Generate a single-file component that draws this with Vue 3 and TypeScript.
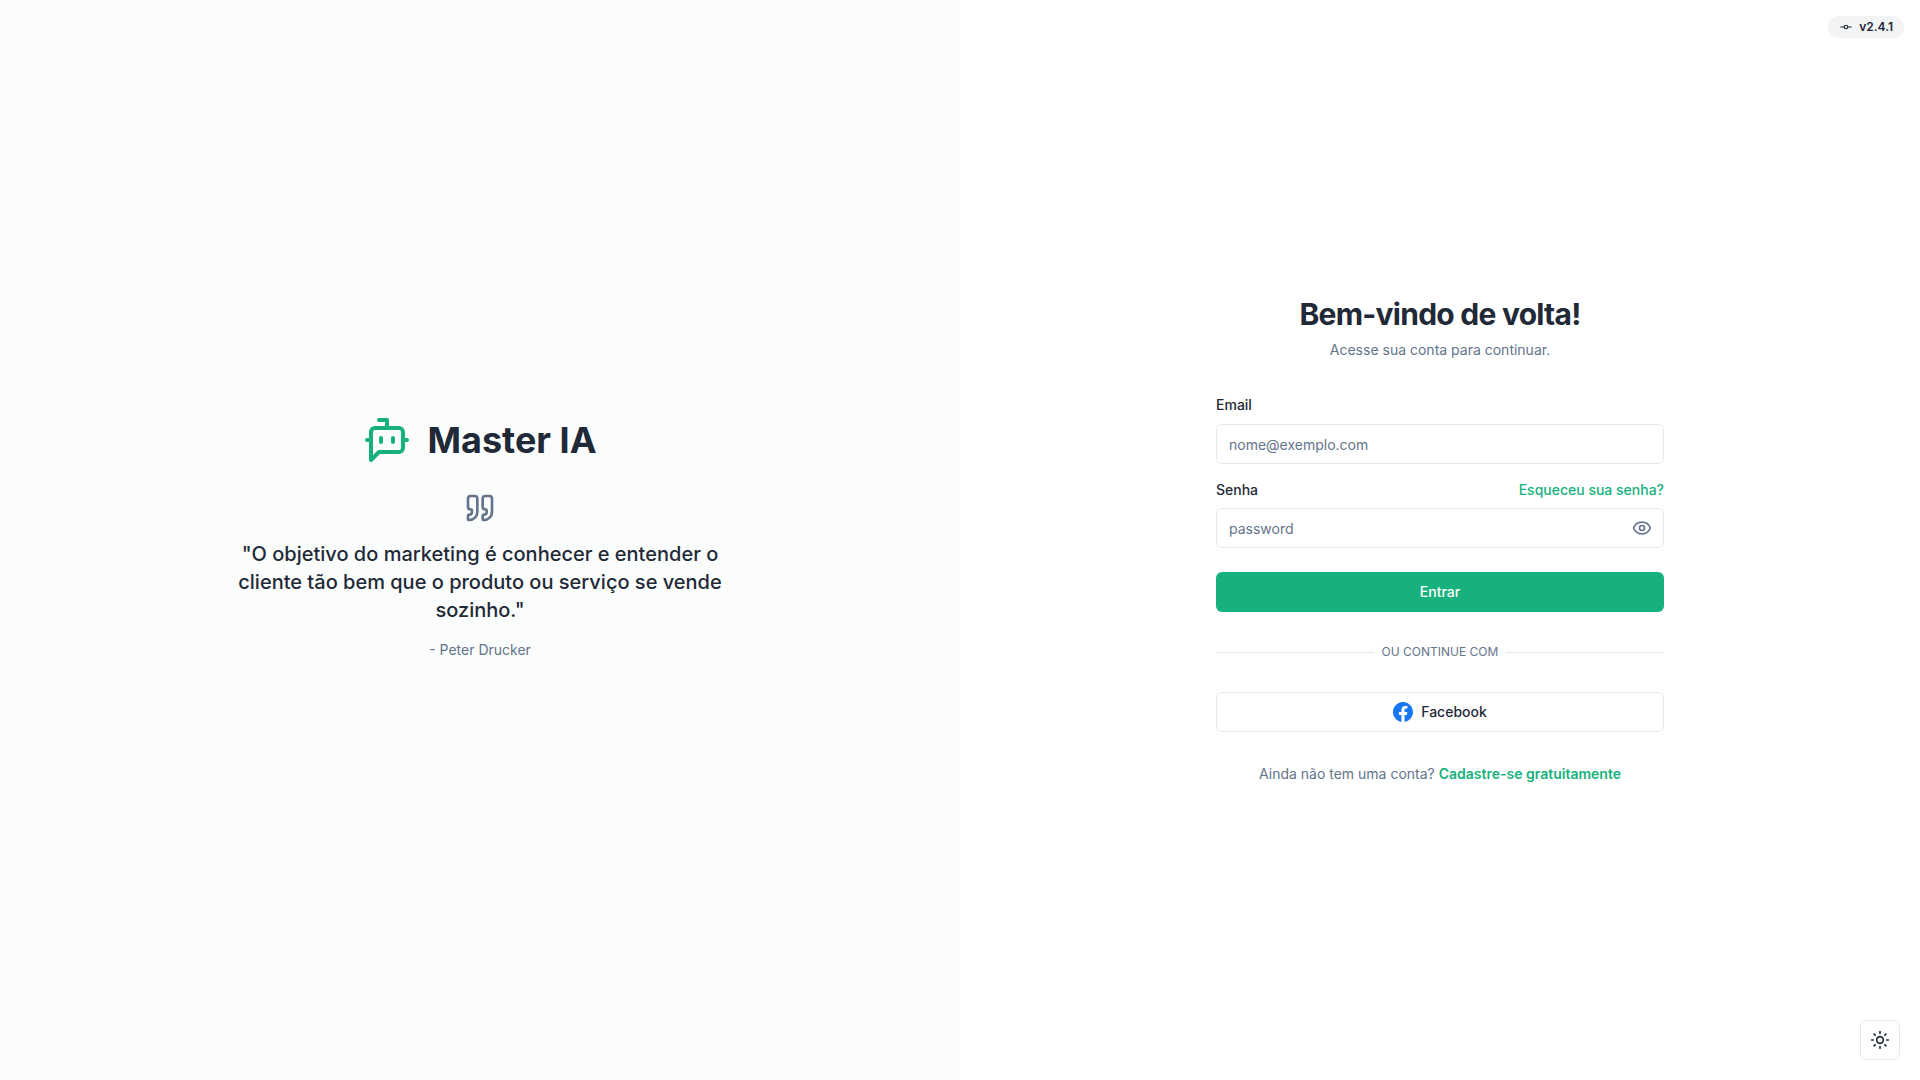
<script setup lang="ts">
import { ref } from 'vue'

const email = ref('')
const password = ref('')
const showPassword = ref(false)
</script>

<template>
  <div class="page">
    <section class="brand-panel">
      <div class="brand-content">
        <div class="brand">
          <svg class="icon brand-icon" viewBox="0 0 24 24" aria-hidden="true">
            <path d="M12 6V2H8" />
            <path d="m8 18-4 4V8a2 2 0 0 1 2-2h12a2 2 0 0 1 2 2v8a2 2 0 0 1-2 2Z" />
            <path d="M2 12h2" />
            <path d="M9 11v2" />
            <path d="M15 11v2" />
            <path d="M20 12h2" />
          </svg>
          <span class="brand-name">Master IA</span>
        </div>
        <svg class="icon quote-icon" viewBox="0 0 24 24" aria-hidden="true">
          <path d="M16 3a2 2 0 0 0-2 2v6a2 2 0 0 0 2 2 1 1 0 0 1 1 1v1a2 2 0 0 1-2 2 1 1 0 0 0-1 1v2a1 1 0 0 0 1 1 6 6 0 0 0 6-6V5a2 2 0 0 0-2-2z" />
          <path d="M5 3a2 2 0 0 0-2 2v6a2 2 0 0 0 2 2 1 1 0 0 1 1 1v1a2 2 0 0 1-2 2 1 1 0 0 0-1 1v2a1 1 0 0 0 1 1 6 6 0 0 0 6-6V5a2 2 0 0 0-2-2z" />
        </svg>
        <blockquote class="quote">
          "O objetivo do marketing é conhecer e entender o cliente tão bem que o produto ou serviço se vende sozinho."
        </blockquote>
        <p class="author">- Peter Drucker</p>
      </div>
    </section>

    <main class="form-panel">
      <div class="form-content">
        <header class="heading">
          <h1>Bem-vindo de volta!</h1>
          <p>Acesse sua conta para continuar.</p>
        </header>

        <form class="form" @submit.prevent>
          <div class="field">
            <div class="label-row label-row-tall">
              <label for="email">Email</label>
            </div>
            <input id="email" v-model="email" class="input" type="email" placeholder="nome@exemplo.com" />
          </div>
          <div class="field">
            <div class="label-row">
              <label for="password">Senha</label>
              <a class="link" href="#">Esqueceu sua senha?</a>
            </div>
            <div class="password">
              <input
                id="password"
                v-model="password"
                class="input input-password"
                :type="showPassword ? 'text' : 'password'"
                placeholder="password"
              />
              <button class="toggle" type="button" aria-label="Mostrar senha" @click="showPassword = !showPassword">
                <svg class="icon" viewBox="0 0 24 24" aria-hidden="true">
                  <path d="M2.062 12.348a1 1 0 0 1 0-.696 10.75 10.75 0 0 1 19.876 0 1 1 0 0 1 0 .696 10.75 10.75 0 0 1-19.876 0" />
                  <circle cx="12" cy="12" r="3" />
                </svg>
              </button>
            </div>
          </div>
          <button class="button button-primary" type="submit">Entrar</button>
        </form>

        <div class="divider"><span>OU CONTINUE COM</span></div>

        <button class="button button-outline" type="button">
          <svg class="facebook" viewBox="0 0 24 24" aria-hidden="true">
            <path d="M24 12.073c0-6.627-5.373-12-12-12s-12 5.373-12 12c0 5.99 4.388 10.954 10.125 11.854v-8.385H7.078v-3.47h3.047V9.43c0-3.007 1.792-4.669 4.533-4.669 1.312 0 2.686.235 2.686.235v2.953H15.83c-1.491 0-1.956.925-1.956 1.874v2.25h3.328l-.532 3.47h-2.796v8.385C19.612 23.027 24 18.062 24 12.073z" />
          </svg>
          Facebook
        </button>

        <p class="signup">Ainda não tem uma conta? <a class="link link-strong" href="#">Cadastre-se gratuitamente</a></p>
      </div>
    </main>

    <div class="version">
      <svg class="icon" viewBox="0 0 24 24" aria-hidden="true">
        <circle cx="12" cy="12" r="3" />
        <path d="M3 12h6" />
        <path d="M15 12h6" />
      </svg>
      v2.4.1
    </div>

    <button class="theme" type="button" aria-label="Alternar tema">
      <svg class="icon" viewBox="0 0 24 24" aria-hidden="true">
        <circle cx="12" cy="12" r="4" />
        <path d="M12 2v2" />
        <path d="M12 20v2" />
        <path d="m4.93 4.93 1.41 1.41" />
        <path d="m17.66 17.66 1.41 1.41" />
        <path d="M2 12h2" />
        <path d="M20 12h2" />
        <path d="m6.34 17.66-1.41 1.41" />
        <path d="m19.07 4.93-1.41 1.41" />
      </svg>
    </button>
  </div>
</template>

<style>
body {
  margin: 0;
  background: #ffffff;
}
</style>

<style scoped>
.page {
  --ink: #1f2937;
  --muted: #64748b;
  --green: #17b17e;
  --line: #e5e7eb;
  position: relative;
  display: grid;
  grid-template-columns: 1fr 1fr;
  min-height: 100vh;
  font-family: Inter, "Liberation Sans", sans-serif;
  font-size: 14px;
  line-height: 20px;
  color: var(--ink);
}

.page * {
  box-sizing: border-box;
}

h1,
p,
blockquote {
  margin: 0;
}

button,
input {
  font: inherit;
  color: inherit;
}

button {
  cursor: pointer;
}

.icon {
  display: block;
  width: 20px;
  height: 20px;
  flex-shrink: 0;
  fill: none;
  stroke: currentColor;
  stroke-width: 2;
  stroke-linecap: round;
  stroke-linejoin: round;
}

.brand-panel,
.form-panel {
  display: flex;
  align-items: center;
  justify-content: center;
}

.brand-panel {
  background: #fafdfc;
}

.brand-content {
  display: flex;
  flex-direction: column;
  align-items: center;
  gap: 16px;
  width: 100%;
  max-width: 512px;
  padding-bottom: 4px;
  text-align: center;
}

.brand {
  display: flex;
  align-items: center;
  gap: 16px;
  margin-bottom: 12px;
}

.brand-icon {
  width: 48px;
  height: 48px;
  color: var(--green);
}

.brand-name {
  font-size: 36px;
  line-height: 40px;
  font-weight: 700;
}

.quote-icon {
  width: 32px;
  height: 32px;
  color: var(--muted);
}

.quote {
  font-size: 20px;
  line-height: 28px;
  font-weight: 500;
}

.author,
.heading p,
.signup {
  color: var(--muted);
}

.form-content {
  display: flex;
  flex-direction: column;
  gap: 32px;
  width: 100%;
  max-width: 448px;
}

.heading {
  display: flex;
  flex-direction: column;
  gap: 8px;
  text-align: center;
}

.heading h1 {
  font-size: 30px;
  line-height: 36px;
  font-weight: 700;
  letter-spacing: -0.025em;
}

.form {
  display: flex;
  flex-direction: column;
  gap: 16px;
}

.field {
  display: flex;
  flex-direction: column;
  gap: 8px;
}

.label-row {
  display: flex;
  align-items: center;
  justify-content: space-between;
  font-weight: 500;
}

.label-row-tall {
  height: 24px;
  padding-top: 2px;
}

.input {
  display: block;
  width: 100%;
  height: 40px;
  padding: 0 12px;
  border: 1px solid var(--line);
  border-radius: 6px;
  background: #ffffff;
}

.input::placeholder {
  color: var(--muted);
  opacity: 1;
}

.input-password {
  padding-right: 40px;
}

.password {
  position: relative;
}

.toggle {
  position: absolute;
  top: 0;
  right: 0;
  display: flex;
  align-items: center;
  height: 40px;
  padding: 0 12px;
  border: 0;
  background: none;
  color: var(--muted);
}

.button {
  display: flex;
  align-items: center;
  justify-content: center;
  gap: 8px;
  width: 100%;
  height: 40px;
  padding: 0 16px;
  border-radius: 6px;
  font-weight: 500;
}

.button-primary {
  margin-top: 8px;
  border: 0;
  background: var(--green);
  color: #ffffff;
}

.button-outline {
  border: 1px solid var(--line);
  background: #ffffff;
}

.facebook {
  width: 20px;
  height: 20px;
  fill: #1877f2;
}

.divider {
  display: flex;
  align-items: center;
  gap: 8px;
  font-size: 12px;
  line-height: 16px;
  color: var(--muted);
}

.divider::before,
.divider::after {
  content: "";
  flex: 1;
  height: 1px;
  background: var(--line);
}

.signup {
  text-align: center;
}

.link {
  color: var(--green);
  text-decoration: none;
}

.link:hover {
  text-decoration: underline;
}

.link-strong {
  font-weight: 600;
}

.version {
  position: absolute;
  top: 16px;
  right: 16px;
  display: flex;
  align-items: center;
  gap: 6px;
  padding: 2px 10px;
  border: 1px solid transparent;
  border-radius: 999px;
  background: #f3f4f6;
  font-size: 12px;
  line-height: 16px;
  font-weight: 600;
}

.version .icon {
  width: 14px;
  height: 14px;
}

.theme {
  position: fixed;
  right: 20px;
  bottom: 20px;
  display: flex;
  align-items: center;
  justify-content: center;
  width: 40px;
  height: 40px;
  padding: 0;
  border: 1px solid var(--line);
  border-radius: 6px;
  background: #ffffff;
}
</style>
